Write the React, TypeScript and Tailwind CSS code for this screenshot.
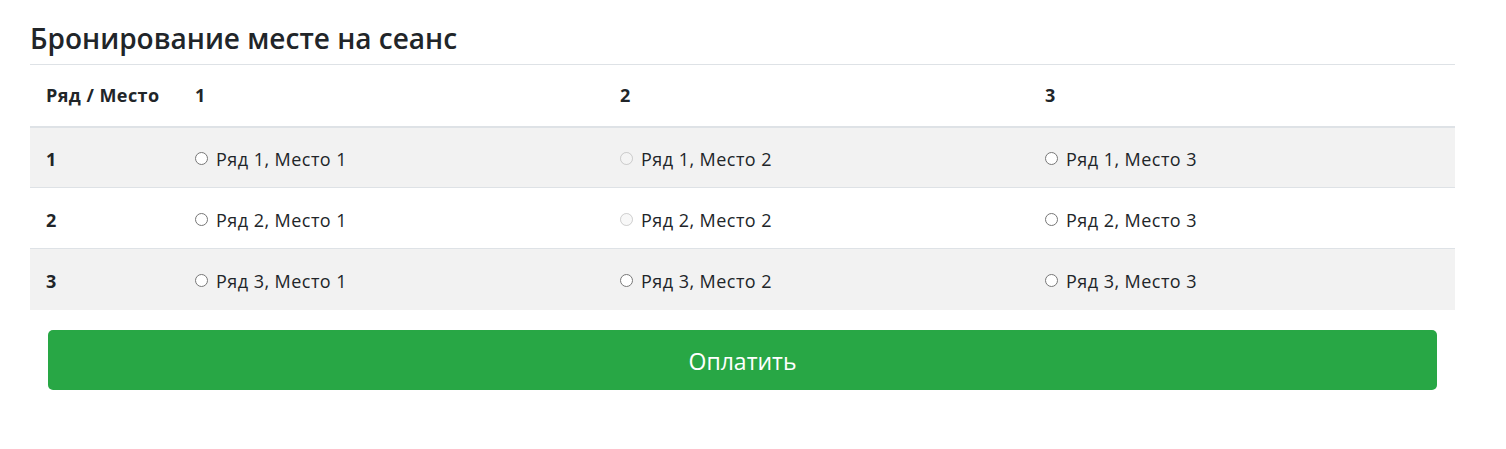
const ROWS = [1, 2, 3];
const SEATS = [1, 2, 3];

// занятые места
const TAKEN: Record<string, boolean> = { "1-2": true, "2-2": true };

export default function App() {
  return (
    <div
      className="bg-white text-[#212529] pl-[30px] pr-[51px] pt-[20px] min-h-[449px]"
      style={{ fontFamily: '"Open Sans", "Noto Sans", sans-serif' }}
    >
      <h3 className="text-[28px] font-semibold leading-[36px] mb-[8px]">Бронирование месте на сеанс</h3>

      <table className="w-full table-fixed border-collapse text-[18px] tracking-[0.45px]">
        <colgroup>
          <col className="w-[150px]" />
          <col />
          <col />
          <col />
        </colgroup>
        <thead>
          <tr className="h-[62px] border-t border-b-2 border-[#dee2e6]">
            <th className="text-left font-bold px-4 align-middle">Ряд / Место</th>
            {SEATS.map((s) => (
              <th key={s} className="text-left font-bold px-[15px] align-middle">
                {s}
              </th>
            ))}
          </tr>
        </thead>
        <tbody>
          {ROWS.map((r, i) => (
            <tr
              key={r}
              className={`h-[61px] border-t border-[#dee2e6] ${i % 2 === 0 ? "bg-[#f2f2f2]" : "bg-white"}`}
            >
              <td className="font-bold px-4 align-middle pt-[4px]">{r}</td>
              {SEATS.map((s) => (
                <td key={s} className="px-[15px] align-middle pt-[4px]">
                  <label className="flex items-center gap-[8px]">
                    <input
                      type="radio"
                      name="seat"
                      disabled={TAKEN[`${r}-${s}`]}
                      className="w-[13px] h-[13px] m-0 -mt-[2px]"
                    />
                    <span>
                      Ряд {r}, Место {s}
                    </span>
                  </label>
                </td>
              ))}
            </tr>
          ))}
        </tbody>
      </table>

      <div className="px-[18px] pt-[20px]">
        <button className="w-full h-[60px] rounded-[5px] bg-[#28a745] text-white text-[23px] pt-[4px]">Оплатить</button>
      </div>
    </div>
  );
}
